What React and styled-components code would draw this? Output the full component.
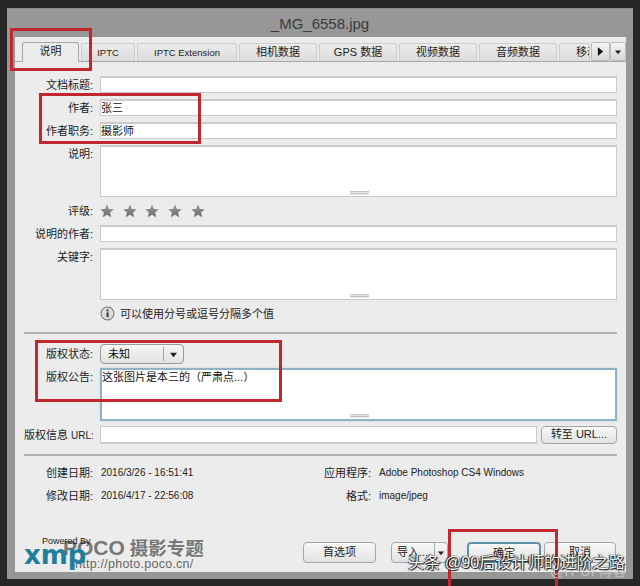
import React from 'react';
import styled, { createGlobalStyle } from 'styled-components';

const GlobalStyle = createGlobalStyle`
  html, body { margin: 0; padding: 0; background: #262626; }
  * { box-sizing: border-box; }
`;

const FONT = `"Liberation Sans", "Noto Sans CJK SC", sans-serif`;

const Page = styled.div`
  position: relative;
  width: 640px;
  height: 586px;
  padding: 8px 7px 7px 7px;
  background: #262626;
  overflow: hidden;
  font-family: ${FONT};
`;

const Dialog = styled.div`
  width: 626px;
  height: 571px;
  display: flex;
  flex-direction: column;
  background: #979797;
  border-top: 1px solid #8a8a8a;
`;

const Title = styled.div`
  height: 28px;
  line-height: 30px;
  text-align: center;
  font-size: 15px;
  color: #3c3c3c;
  flex: none;
`;

const Panel = styled.div`
  width: 611px;
  height: 535px;
  margin-left: 8px;
  background: #ececec;
  display: flex;
  flex-direction: column;
`;

const TabBar = styled.div`
  height: 25px;
  flex: none;
  padding: 6px 0 0 7px;
  display: flex;
  align-items: flex-end;
  gap: 2px;
  border-bottom: 1px solid #a8a8a8;
  background: #ebebeb;
`;

const Tab = styled.div`
  flex: none;
  width: ${p => p.$w}px;
  height: ${p => (p.$active ? 20 : 18)}px;
  line-height: 17px;
  text-align: ${p => (p.$clipped ? 'left' : 'center')};
  padding-left: ${p => (p.$clipped ? 16 : 0)}px;
  font-size: ${p => (p.$latin ? 9.5 : 11)}px;
  color: #222;
  border: 1px solid #cdcdcd;
  border-bottom: none;
  border-radius: 3px 3px 0 0;
  background: ${p => (p.$active ? '#ececec' : 'linear-gradient(#ececec, #dcdcdc)')};
  ${p => p.$active && 'margin-bottom: -1px; border-color: #a8a8a8;'}
  overflow: hidden;
  white-space: nowrap;
`;

const TabControls = styled.div`
  margin-left: -1px;
  flex: none;
  display: flex;
  height: 19px;
`;

const TabControl = styled.div`
  width: ${p => p.$w}px;
  display: flex;
  align-items: center;
  justify-content: center;
  border: 1px solid #bbb;
  border-radius: 2px;
  background: linear-gradient(#f4f4f4, #d8d8d8);
`;

const Body = styled.div`
  flex: 1;
  display: flex;
  flex-direction: column;
  padding: 14px 9px 0 9px;
`;

const Row = styled.div`
  display: grid;
  grid-template-columns: 69px 1fr;
  column-gap: 7px;
  margin-bottom: ${p => p.$mb ?? 6}px;
  align-items: ${p => (p.$top ? 'start' : 'center')};
`;

const Label = styled.div`
  font-size: 11px;
  line-height: 16px;
  text-align: right;
  color: #222;
  white-space: nowrap;
  ${p => p.$top && 'padding-top: 1px;'}
`;

const UrlLabel = styled.span`
  font-size: 10px;
`;

const Field = styled.div`
  position: relative;
  height: ${p => p.$h ?? 17}px;
  line-height: 15px;
  font-size: 11px;
  color: #111;
  background: #fff;
  border: 1px solid #cbcbcb;
  border-top-width: 2px;
`;

const FocusField = styled(Field)`
  border: 2px solid #8fb2c4;
  box-shadow: 0 0 2px #b9d8e8;
`;

const Grip = styled.div`
  position: absolute;
  left: 50%;
  bottom: 1px;
  width: 19px;
  height: 4px;
  margin-left: -9px;
  background: repeating-linear-gradient(#c4c4c4 0 1px, #e6e6e6 1px 2px);
`;

const Stars = styled.div`
  display: flex;
  gap: 8.7px;
  height: 16px;
  align-items: center;
`;

const Hint = styled.div`
  display: flex;
  align-items: center;
  gap: 5px;
  font-size: 11px;
  color: #222;
  height: 16px;
`;

const Separator = styled.div`
  height: 2px;
  background: #b2b2b2;
  margin: ${p => p.$m};
`;

const Select = styled.div`
  width: 84px;
  height: 20px;
  display: flex;
  border: 1px solid #9a9a9a;
  border-radius: 4px;
  background: linear-gradient(#f6f6f6, #e2e2e2);
  font-size: 11px;
  line-height: 18px;
  color: #111;
`;

const SelectText = styled.div`
  flex: 1;
  padding-left: 7px;
  border-right: 1px solid #a8a8a8;
  margin: 2px 0;
  line-height: 14px;
`;

const SelectArrow = styled.div`
  width: 19px;
  display: flex;
  align-items: center;
  justify-content: center;
`;

const UrlField = styled.div`
  display: flex;
  gap: 4px;
`;

const UrlInput = styled(Field)`
  flex: 1;
  border-top-width: 1px;
  border-bottom-width: 2px;
`;

const Button = styled.div`
  flex: none;
  width: ${p => p.$w}px;
  height: ${p => p.$h ?? 21}px;
  margin-left: ${p => p.$ml ?? 0}px;
  line-height: ${p => (p.$h ?? 21) - 3}px;
  text-align: center;
  font-size: 11px;
  color: #222;
  border: 1px solid ${p => (p.$primary ? '#5c93a8' : '#a6a6a6')};
  border-width: ${p => (p.$primary ? '2px' : '1px')};
  border-radius: 4px;
  background: linear-gradient(#f8f8f8, #e2e2e2);
`;

const InfoGrid = styled.div`
  display: grid;
  grid-template-columns: 278px 1fr;
  row-gap: 7px;
  font-size: 10px;
  line-height: 16px;
  color: #222;
`;

const InfoRow = styled.div`
  display: grid;
  grid-template-columns: 69px 1fr;
  column-gap: 8px;
`;

const Footer = styled.div`
  margin-top: auto;
  height: 30px;
  display: flex;
  padding: 0 1px 9px 279px;
`;

const SplitButton = styled.div`
  flex: none;
  display: flex;
  width: 57px;
  height: 21px;
  margin: 0 19px 0 15px;
  border: 1px solid #a6a6a6;
  border-radius: 4px;
  background: linear-gradient(#f8f8f8, #e2e2e2);
  font-size: 11px;
  line-height: 18px;
  color: #222;
`;

const SplitMain = styled.div`
  width: 43px;
  padding-left: 5px;
  border-right: 1px solid #a8a8a8;
`;

const SplitArrow = styled.div`
  flex: 1;
  display: flex;
  align-items: center;
  justify-content: center;
`;

const RedBox = styled.div`
  position: absolute;
  left: ${p => p.$x}px;
  top: ${p => p.$y}px;
  width: ${p => p.$w}px;
  height: ${p => p.$h}px;
  border: 3px solid #c2272d;
  pointer-events: none;
`;

const Logo = styled.div`
  position: absolute;
  left: 24px;
  top: 536px;
  width: 190px;
  height: 36px;
`;

const PoweredBy = styled.div`
  position: absolute;
  left: 18px;
  top: 0;
  font-size: 9px;
  line-height: 10px;
  color: #222;
  white-space: nowrap;
`;

const Xmp = styled.div`
  position: absolute;
  left: 0;
  top: 4px;
  font-family: "DejaVu Sans", sans-serif;
  font-size: 26px;
  line-height: 30px;
  font-weight: 700;
  color: #1f7f9f;
`;

const PocoName = styled.div`
  position: absolute;
  left: 39px;
  top: 0;
  display: flex;
  align-items: baseline;
  gap: 5px;
  font-size: 21px;
  line-height: 23px;
  font-weight: 700;
  color: #777;
  white-space: nowrap;
`;

const PocoTag = styled.span`
  font-size: 18.5px;
`;

const PocoUrl = styled.div`
  position: absolute;
  left: 51px;
  top: 21px;
  font-size: 12.5px;
  line-height: 15px;
  color: #666;
  letter-spacing: .25px;
  white-space: nowrap;
`;

const Watermark = styled.div`
  position: absolute;
  left: 408px;
  top: 550px;
  font-size: 16.2px;
  line-height: 24px;
  color: #f4f4f4;
  text-shadow: 0 0 1px #111, 1px 1px 1px #111, -1px 0 1px #111;
  white-space: nowrap;
`;

const WatermarkFaint = styled.div`
  position: absolute;
  left: 550px;
  top: 563px;
  font-size: 14px;
  line-height: 16px;
  color: rgba(210, 210, 210, .75);
  white-space: nowrap;
`;

const Star = () => (
  <svg width="14" height="14" viewBox="0 0 24 24">
    <defs>
      <linearGradient id="starFill" x1="0" y1="0" x2="0" y2="1">
        <stop offset="0" stopColor="#999" />
        <stop offset="1" stopColor="#6e6e6e" />
      </linearGradient>
    </defs>
    <path fill="url(#starFill)" d="M12 1l3.3 7.4 8.2.8-6.2 5.4 1.9 8L12 18.3l-7.2 4.3 1.9-8L.5 9.2l8.2-.8z" />
  </svg>
);

const InfoIcon = () => (
  <svg width="15" height="15" viewBox="0 0 15 15">
    <circle cx="7.5" cy="7.5" r="6.5" fill="#dcdcdc" stroke="#666" />
    <rect x="6.6" y="6.4" width="1.9" height="4.8" fill="#333" />
    <rect x="6.6" y="3.5" width="1.9" height="1.9" fill="#333" />
  </svg>
);

const ArrowDown = ({ s = 7 }) => (
  <svg width={s} height={s} viewBox="0 0 8 8"><path d="M0 2h8L4 7z" fill="#222" /></svg>
);

const ArrowRight = () => (
  <svg width="7" height="9" viewBox="0 0 8 10"><path d="M1 0l6 5-6 5z" fill="#111" /></svg>
);

const tabs = [
  { label: 'IPTC', w: 54, latin: true },
  { label: 'IPTC Extension', w: 100, latin: true },
  { label: '相机数据', w: 78 },
  { label: 'GPS 数据', w: 78 },
  { label: '视频数据', w: 78 },
  { label: '音频数据', w: 78 },
];

const App = () => (
  <Page>
    <GlobalStyle />
    <Dialog>
      <Title>_MG_6558.jpg</Title>
      <Panel>
        <TabBar>
          <Tab $active $w={57}>说明</Tab>
          {tabs.map(t => (
            <Tab key={t.label} $w={t.w} $latin={t.latin}>{t.label}</Tab>
          ))}
          <Tab $w={31} $clipped>移动</Tab>
          <TabControls>
            <TabControl $w={19}><ArrowRight /></TabControl>
            <TabControl $w={16}><ArrowDown s={6} /></TabControl>
          </TabControls>
        </TabBar>
        <Body>
          <Row><Label>文档标题:</Label><Field /></Row>
          <Row><Label>作者:</Label><Field>张三</Field></Row>
          <Row><Label>作者职务:</Label><Field>摄影师</Field></Row>
          <Row $top><Label $top>说明:</Label><Field $h={52}><Grip /></Field></Row>
          <Row $mb={6}>
            <Label>评级:</Label>
            <Stars>{[0, 1, 2, 3, 4].map(i => <Star key={i} />)}</Stars>
          </Row>
          <Row><Label>说明的作者:</Label><Field /></Row>
          <Row $top $mb={5}><Label $top>关键字:</Label><Field $h={52}><Grip /></Field></Row>
          <Row $mb={0}>
            <span />
            <Hint><InfoIcon />可以使用分号或逗号分隔多个值</Hint>
          </Row>
          <Separator $m="11px 0 10px" />
          <Row $mb={4}>
            <Label>版权状态:</Label>
            <Select>
              <SelectText>未知</SelectText>
              <SelectArrow><ArrowDown /></SelectArrow>
            </Select>
          </Row>
          <Row $top $mb={5}>
            <Label $top>版权公告:</Label>
            <FocusField $h={53}>这张图片是本三的（严肃点...）<Grip /></FocusField>
          </Row>
          <Row $mb={0}>
            <Label>版权信息 <UrlLabel>URL:</UrlLabel></Label>
            <UrlField>
              <UrlInput $h={18} />
              <Button $w={76} $h={18}>转至 URL...</Button>
            </UrlField>
          </Row>
          <Separator $m="10px 0 9px" />
          <InfoGrid>
            <InfoRow><Label>创建日期:</Label><span>2016/3/26 - 16:51:41</span></InfoRow>
            <InfoRow><Label>应用程序:</Label><span>Adobe Photoshop CS4 Windows</span></InfoRow>
            <InfoRow><Label>修改日期:</Label><span>2016/4/17 - 22:56:08</span></InfoRow>
            <InfoRow><Label>格式:</Label><span>image/jpeg</span></InfoRow>
          </InfoGrid>
          <Footer>
            <Button $w={73}>首选项</Button>
            <SplitButton>
              <SplitMain>导入...</SplitMain>
              <SplitArrow><ArrowDown s={6} /></SplitArrow>
            </SplitButton>
            <Button $w={74} $primary>确定</Button>
            <Button $w={72} $ml={3}>取消</Button>
          </Footer>
        </Body>
      </Panel>
    </Dialog>

    <RedBox $x={10} $y={28} $w={82} $h={43} />
    <RedBox $x={39} $y={93} $w={162} $h={51} />
    <RedBox $x={35} $y={340} $w={247} $h={62} />
    <RedBox $x={448} $y={529} $w={110} $h={60} />

    <Logo>
      <PocoName>POCO<PocoTag>摄影专题</PocoTag></PocoName>
      <PocoUrl>http://photo.poco.cn/</PocoUrl>
      <Xmp>xmp</Xmp>
      <PoweredBy>Powered By</PoweredBy>
    </Logo>
    <WatermarkFaint>@IT UI 博客</WatermarkFaint>
    <Watermark>头条 @90后设计师的进阶之路</Watermark>
  </Page>
);

export default App;
